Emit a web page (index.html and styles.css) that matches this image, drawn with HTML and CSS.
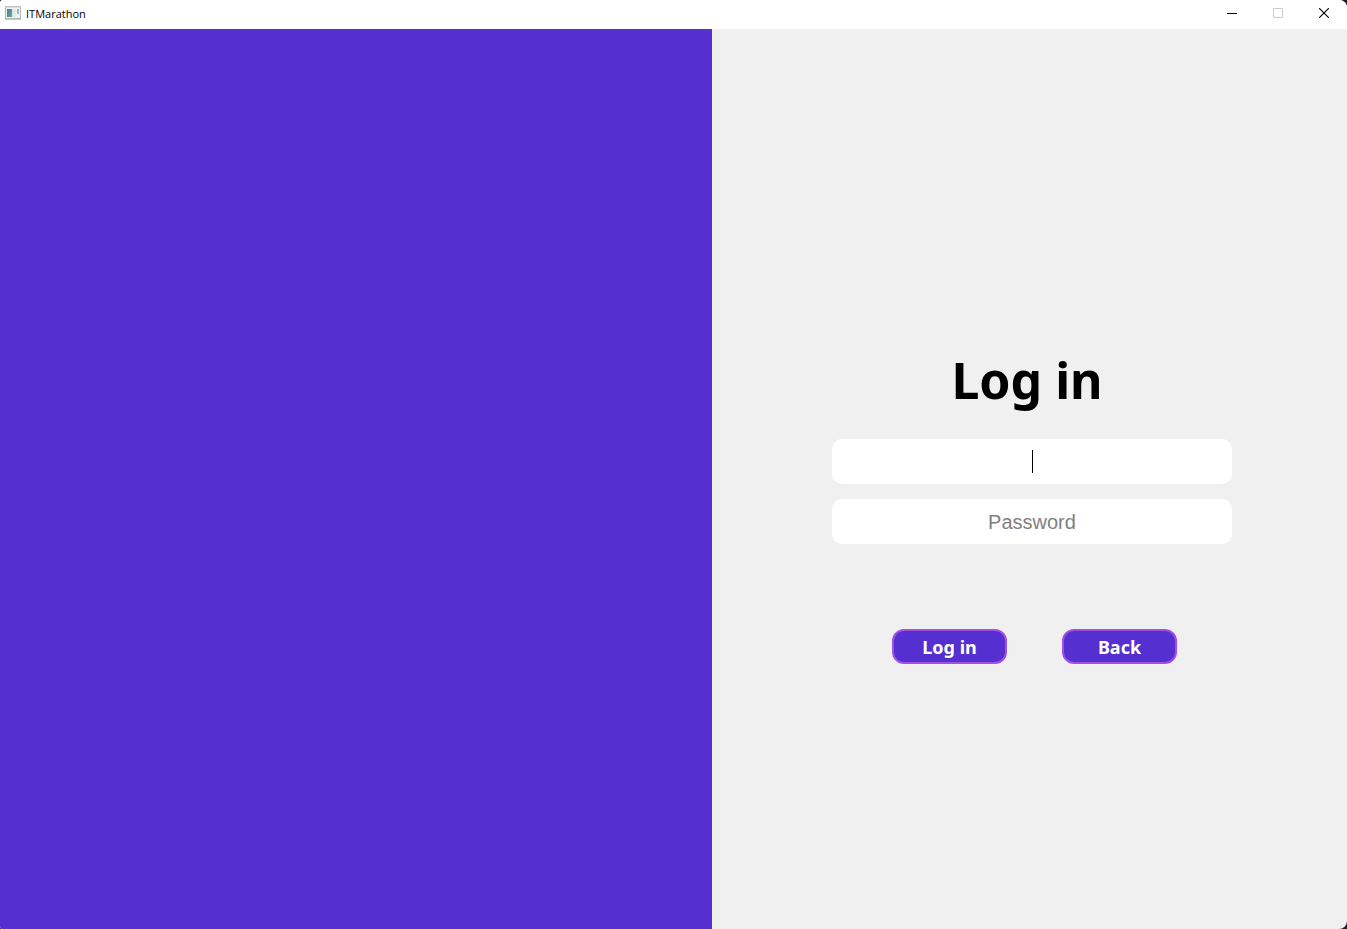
FILE: index.html
```html
<!DOCTYPE html>
<html lang="en">
<head>
<meta charset="utf-8">
<meta name="viewport" content="width=device-width, initial-scale=1">
<title>ITMarathon</title>
<link rel="stylesheet" href="styles.css">
</head>
<body>
<div class="window">
  <header class="titlebar">
    <svg class="app-icon" width="16" height="14" viewBox="0 0 16 14" aria-hidden="true">
      <defs>
        <linearGradient id="pane" x1="0" y1="0" x2="1" y2="1">
          <stop offset="0" stop-color="#4a78b0"/>
          <stop offset="1" stop-color="#5fae7c"/>
        </linearGradient>
      </defs>
      <rect x="0.5" y="0.5" width="15" height="12" fill="#f2f4f4" stroke="#b4b8ba"/>
      <path d="M0 1h16M0 13.5h16" stroke="#c4c8ca"/>
      <rect x="2" y="3" width="5" height="8" fill="url(#pane)"/>
      <rect x="7" y="3" width="4" height="8" fill="#e2e6e6"/>
      <rect x="12" y="3" width="2" height="5" fill="url(#pane)" opacity="0.6"/>
    </svg>
    <span class="app-name">ITMarathon</span>
    <div class="window-controls">
      <button class="control" type="button" aria-label="Minimize">
        <svg width="10" height="10" viewBox="0 0 10 10"><path d="M0 5.5h10" stroke="#000"/></svg>
      </button>
      <button class="control" type="button" aria-label="Maximize" disabled>
        <svg width="10" height="10" viewBox="0 0 10 10"><rect x="0.5" y="0.5" width="9" height="9" rx="0.5" fill="none" stroke="#ccc"/></svg>
      </button>
      <button class="control" type="button" aria-label="Close">
        <svg width="10" height="10" viewBox="0 0 10 10"><path d="M0 0l10 10M10 0L0 10" stroke="#000" stroke-width="1.1"/></svg>
      </button>
    </div>
  </header>
  <main class="content">
    <div class="brand-panel"></div>
    <section class="login-panel">
      <form class="login-form">
        <h1 class="heading">Log in</h1>
        <input class="field field-active" type="text" name="login" aria-label="Login">
        <input class="field" type="password" name="password" placeholder="Password" aria-label="Password">
        <div class="actions">
          <button class="action" type="submit">Log in</button>
          <button class="action" type="button">Back</button>
        </div>
      </form>
    </section>
  </main>
</div>
</body>
</html>
```
FILE: styles.css
```css
* {
  box-sizing: border-box;
}

body {
  margin: 0;
  background: #202028;
}

.window {
  display: flex;
  flex-direction: column;
  min-height: 100vh;
  overflow: hidden;
  border-radius: 3px 8px 8px 3px;
  background: #f0f0f0;
}

.titlebar {
  display: flex;
  align-items: center;
  height: 29px;
  padding: 0 0 3px 5px;
  background: #fff;
}

.app-icon {
  margin-right: 5px;
}

.app-name {
  padding-top: 1px;
  font: 11px/16px "Open Sans", "Noto Sans", sans-serif;
  color: #000;
}

.window-controls {
  display: flex;
  margin-left: auto;
}

.control {
  display: flex;
  align-items: center;
  justify-content: center;
  width: 46px;
  height: 26px;
  padding: 0;
  border: 0;
  background: none;
}

.content {
  display: grid;
  grid-template-columns: 712fr 635fr;
  flex: 1;
}

.brand-panel {
  background: #562fd0;
}

.login-panel {
  display: flex;
  align-items: center;
  justify-content: center;
  padding: 56px 0 0 5px;
}

.login-form {
  display: flex;
  flex-direction: column;
  gap: 15px;
  width: 400px;
}

.heading {
  margin: 0 10px 14px 0;
  font: bold 50px/60px "Noto Sans", "Open Sans", sans-serif;
  text-align: center;
  color: #000;
}

.field {
  width: 100%;
  height: 45px;
  padding: 2px 10px 0;
  border: 0;
  border-radius: 10px;
  outline: 0;
  background: #fff;
  font: 20px/24px "Liberation Sans", Arial, sans-serif;
  text-align: center;
  color: #000;
}

.field::placeholder {
  color: #808080;
  opacity: 1;
}

/* Steady, non-blinking caret in the middle of the active field */
.field-active {
  caret-color: transparent;
  background: #fff linear-gradient(#000, #000) center / 1px 23px no-repeat;
}

.actions {
  display: flex;
  justify-content: center;
  gap: 55px;
  margin-top: 70px;
  padding-left: 5px;
}

.action {
  width: 115px;
  height: 35px;
  padding: 0;
  border: 2px solid #a050e6;
  border-radius: 12px;
  background: #562fd0;
  font: bold 18px/24px "Noto Sans", "Open Sans", sans-serif;
  color: #fff;
}
```
